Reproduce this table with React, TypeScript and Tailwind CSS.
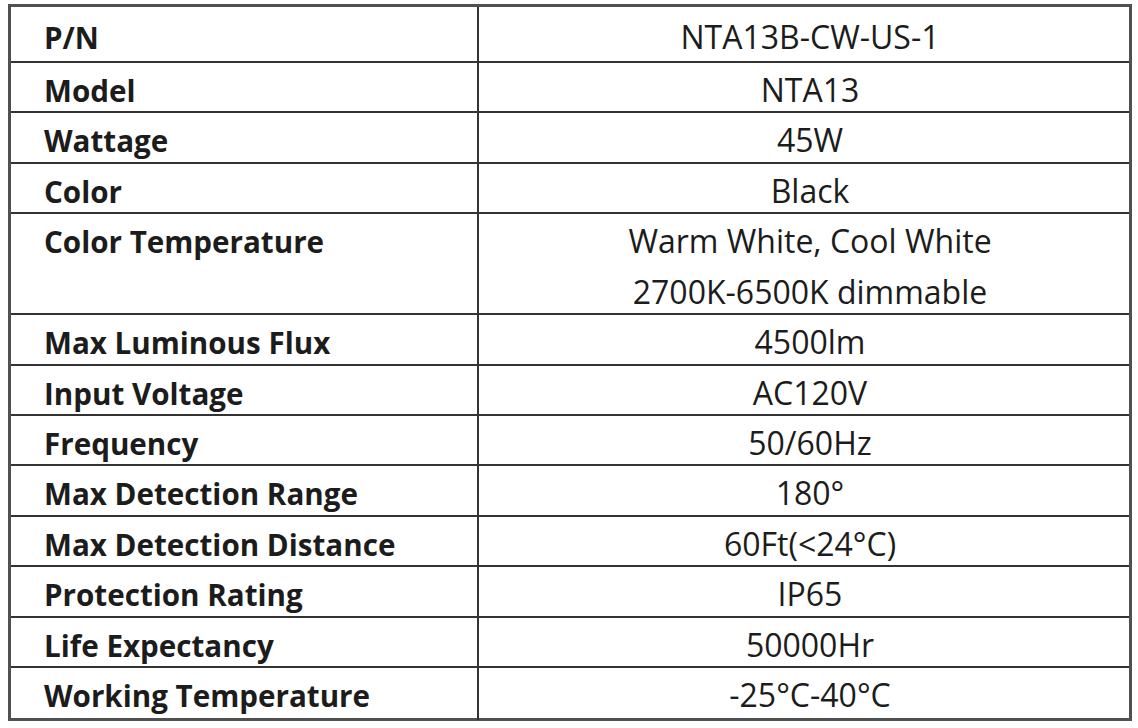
const rows: { label: string; value: string[]; tall?: boolean }[] = [
  { label: "P/N", value: ["NTA13B-CW-US-1"] },
  { label: "Model", value: ["NTA13"] },
  { label: "Wattage", value: ["45W"] },
  { label: "Color", value: ["Black"] },
  { label: "Color Temperature", value: ["Warm White, Cool White", "2700K-6500K dimmable"], tall: true },
  { label: "Max Luminous Flux", value: ["4500lm"] },
  { label: "Input Voltage", value: ["AC120V"] },
  { label: "Frequency", value: ["50/60Hz"] },
  { label: "Max Detection Range", value: ["180°"] },
  { label: "Max Detection Distance", value: ["60Ft(<24°C)"] },
  { label: "Protection Rating", value: ["IP65"] },
  { label: "Life Expectancy", value: ["50000Hr"] },
  { label: "Working Temperature", value: ["-25°C-40°C"] },
];

export default function App() {
  return (
    <div className="w-[1138px] h-[728px] bg-white pt-[4px] pl-[8px] font-['Open_Sans',sans-serif] text-[#1c1c1c]">
      <div className="w-[1124px] border-[3px] border-[#505050]">
        {rows.map((r, i) => (
          <div
            key={r.label}
            className={`grid grid-cols-[468px_1fr] ${i < rows.length - 1 ? "border-b-2 border-[#333]" : ""} ${
              i === 0 ? "h-[56px]" : r.tall ? "h-[101px]" : "h-[50.4px]"
            }`}
          >
            <div className={`border-r-2 border-[#333] pl-[33px] text-[29.6px] font-bold leading-[49px] ${i === 0 ? "pt-[6px]" : "pt-[3px]"}`}>
              {r.label}
            </div>
            <div className={`flex flex-col items-center pl-[12px] text-[32px] leading-[50.5px] ${i === 0 ? "pt-[5px]" : "pt-[2px]"}`}>
              {r.value.map((v) => (
                <span key={v}>{v}</span>
              ))}
            </div>
          </div>
        ))}
      </div>
    </div>
  );
}
